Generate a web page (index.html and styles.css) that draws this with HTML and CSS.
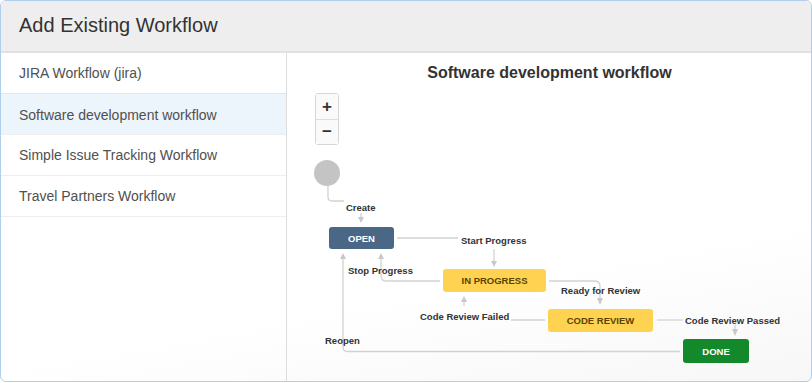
FILE: index.html
```html
<!DOCTYPE html>
<html lang="en">
<head>
    <meta charset="UTF-8">
    <title>Add Existing Workflow</title>
    <link rel="stylesheet" href="styles.css">
</head>
<body>
    <div class="dialog">
        <div class="dialog-header">Add Existing Workflow</div>
        <div class="dialog-body">
            <ul class="workflow-list">
                <li class="workflow-item">JIRA Workflow (jira)</li>
                <li class="workflow-item selected">Software development workflow</li>
                <li class="workflow-item">Simple Issue Tracking Workflow</li>
                <li class="workflow-item">Travel Partners Workflow</li>
            </ul>
            <div class="preview">
                <div class="preview-title">Software development workflow</div>
                <div class="canvas">
                    <div class="zoom">
                        <button class="zoom-btn">+</button>
                        <button class="zoom-btn">&minus;</button>
                    </div>
                    <svg class="diagram" width="525" height="291" viewBox="287 90 525 291">
                        <g class="lines" fill="none" stroke="#d2d2d2" stroke-width="1.3">
                            <path d="M328 186 V197 Q328 201 332 201 H344"/>
                            <path d="M361 213 V218"/>
                            <path d="M397 238 H458"/>
                            <path d="M494 249 V261"/>
                            <path d="M440 281 H386 Q381 281 381 276 V259"/>
                            <path d="M680 351.5 H347 Q343 351.5 343 347 V259"/>
                            <path d="M549 281 H594 Q600 281 600 286 V298"/>
                            <path d="M545 320 H511"/>
                            <path d="M464 306 V301"/>
                            <path d="M657 320 H683"/>
                            <path d="M735 325 V329"/>
                        </g>
                        <g class="arrows" fill="#c8c8c8">
                            <path d="M358 217 H364 L361 223 Z"/>
                            <path d="M491 261 H497 L494 267 Z"/>
                            <path d="M378 259 H384 L381 253 Z"/>
                            <path d="M340 259 H346 L343 253 Z"/>
                            <path d="M597 298 H603 L600 305 Z"/>
                            <path d="M461 302 H467 L464 296 Z"/>
                            <path d="M732 329 H738 L735 336 Z"/>
                        </g>
                        <circle cx="327" cy="173" r="13" fill="#c4c4c4"/>

                        <rect x="329" y="227" width="65" height="22" rx="3" fill="#4a6785"/>
                        <text class="status light" x="361.5" y="241.5">OPEN</text>

                        <rect x="443" y="269" width="103" height="23" rx="3" fill="#ffd351"/>
                        <text class="status dark" x="494.5" y="284">IN PROGRESS</text>

                        <rect x="548" y="309" width="105" height="23" rx="3" fill="#ffd351"/>
                        <text class="status dark" x="600.5" y="324">CODE REVIEW</text>

                        <rect x="683" y="339" width="66" height="24" rx="3" fill="#14892c"/>
                        <text class="status light" x="716" y="354.5">DONE</text>

                        <text class="label" x="346" y="210.5">Create</text>
                        <text class="label" x="461" y="244">Start Progress</text>
                        <text class="label" x="348" y="274">Stop Progress</text>
                        <text class="label" x="561" y="293.5">Ready for Review</text>
                        <text class="label" x="420" y="320">Code Review Failed</text>
                        <text class="label" x="685" y="323.5">Code Review Passed</text>
                        <text class="label" x="325" y="343.5">Reopen</text>
                    </svg>
                </div>
            </div>
        </div>
    </div>
</body>
</html>
```

FILE: styles.css
```css
* {
    margin: 0;
    padding: 0;
    box-sizing: border-box;
}

body {
    font-family: "Liberation Sans", Arial, sans-serif;
    background: #ffffff;
    color: #333333;
    width: 812px;
    height: 383px;
    overflow: hidden;
}

.dialog {
    width: 812px;
    height: 382px;
    border: 1px solid #b1cfed;
    border-radius: 6px;
    overflow: hidden;
    display: flex;
    flex-direction: column;
    background: linear-gradient(170deg, #ffffff 70%, #f7f7f7 100%);
}

.dialog-header {
    height: 52px;
    flex: none;
    background: #eeeeee;
    border-bottom: 2px solid #e2e2e2;
    padding: 12px 0 0 18px;
    font-size: 20px;
    line-height: 24px;
    color: #333333;
}

.dialog-body {
    flex: 1;
    display: grid;
    grid-template-columns: 286px 1fr;
}

.workflow-list {
    list-style: none;
    border-right: 1px solid #dddddd;
}

.workflow-item {
    height: 41px;
    padding: 12px 0 0 18px;
    font-size: 14px;
    line-height: 16px;
    color: #505050;
    border-bottom: 1px solid #eeeeee;
}

.workflow-item.selected {
    background: #ecf4fc;
    border-top: 1px solid #dfe8f1;
    margin-top: -1px;
    height: 42px;
    padding-top: 13px;
}

.preview {
    display: flex;
    flex-direction: column;
}

.preview-title {
    height: 37px;
    padding-top: 11px;
    text-align: center;
    font-size: 16px;
    line-height: 18px;
    font-weight: bold;
    color: #333333;
}

.canvas {
    position: relative;
    flex: 1;
}

.diagram {
    display: block;
}

.zoom {
    position: absolute;
    left: 28px;
    top: 3px;
    display: flex;
    flex-direction: column;
    width: 24px;
    border: 1px solid #d6d6d6;
    border-radius: 3px;
    background: #ffffff;
}

.zoom-btn {
    height: 25px;
    border: none;
    background: #fafafa;
    font-family: "Liberation Sans", Arial, sans-serif;
    font-size: 17px;
    font-weight: bold;
    line-height: 24px;
    color: #333333;
}

.zoom-btn + .zoom-btn {
    border-top: 1px solid #dddddd;
}

.label {
    font-family: "Liberation Sans", Arial, sans-serif;
    font-size: 9.5px;
    font-weight: bold;
    fill: #333333;
}

.status {
    font-family: "Liberation Sans", Arial, sans-serif;
    font-size: 9.5px;
    font-weight: bold;
    text-anchor: middle;
}

.status.light {
    fill: #ffffff;
}

.status.dark {
    fill: #594300;
}
```
